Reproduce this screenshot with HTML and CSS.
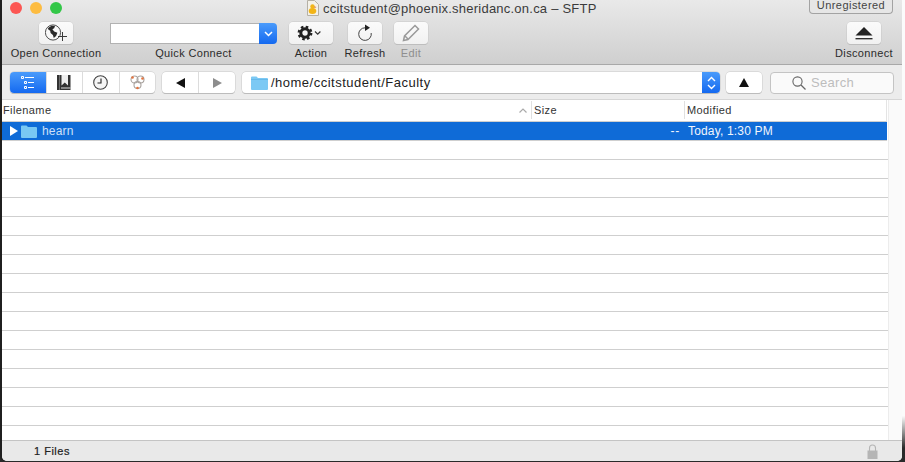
FILE: index.html
```html
<!DOCTYPE html>
<html lang="en">
<head>
<meta charset="utf-8">
<title>ccitstudent@phoenix.sheridanc.on.ca – SFTP</title>
<link rel="stylesheet" href="styles.css">
</head>
<body>
<div class="window">
  <header class="chrome">
    <div class="titlebar">
      <div class="lights"><i class="light red"></i><i class="light amber"></i><i class="light green"></i></div>
      <div class="title">
        <svg class="doc" width="13" height="16" viewBox="0 0 13 16"><path d="M1.500 .5h7l4 4v11h-11z" fill="#f4f1e8" stroke="#b5b0a5"/><circle cx="6.500" cy="6.500" r="2.200" fill="#f1b61c"/><ellipse cx="6.500" cy="11" rx="3.800" ry="2.900" fill="#f2b416"/><path d="M8.500 6.500l2 .6-2 .8z" fill="#d9541e"/></svg>
        <span>ccitstudent@phoenix.sheridanc.on.ca – SFTP</span>
      </div>
      <div class="badge">Unregistered</div>
    </div>
    <div class="toolbar">
      <div class="tool tool-open">
        <button class="btn btn-34"><svg width="23" height="18" viewBox="0 0 23 18"><circle cx="8" cy="8.500" r="7.600" fill="#f8f8f8" stroke="#3a3a3a" stroke-width=".9"/><path d="M3 4l3.500-2.300 3.500.4-.8 2.200-1.800.9 1.800 2.300 3.200 1.200-1.300 3.200-2.300 2.200-.9-3.200-2.300-1.800-.4-2.300-1.900-1.300z" fill="#2a2a2a"/><path d="M17.500 8v9M13 12.500h9" stroke="#3a3a3a" stroke-width="1" fill="none"/></svg></button>
        <span class="tool-label">Open Connection</span>
      </div>
      <div class="tool tool-quick">
        <div class="combo"><span class="combo-field"></span><span class="combo-arrow"><svg width="9" height="6" viewBox="0 0 9 6"><path d="M1 1l3.500 3.500L8 1" fill="none" stroke="#fff" stroke-width="1.500"/></svg></span></div>
        <span class="tool-label">Quick Connect</span>
      </div>
      <div class="tool tool-action">
        <button class="btn btn-44"><svg width="28" height="16" viewBox="0 0 28 16"><circle cx="8" cy="8" r="4.200" fill="none" stroke="#222" stroke-width="3"/><circle cx="8" cy="8" r="6.200" fill="none" stroke="#222" stroke-width="2.400" stroke-dasharray="2.500 2.370"/><path d="M18 6.500l2.700 2.700 2.700-2.700" fill="none" stroke="#333" stroke-width="1.200"/></svg></button>
        <span class="tool-label">Action</span>
      </div>
      <div class="tool tool-refresh">
        <button class="btn btn-34"><svg width="18" height="18" viewBox="0 0 18 18"><path d="M9 3.800A6.300 6.300 0 1 0 15.200 9" fill="none" stroke="#444" stroke-width="1"/><path d="M9 .5l5 3.300-5 3.200z" fill="#222"/></svg></button>
        <span class="tool-label">Refresh</span>
      </div>
      <div class="tool tool-edit">
        <button class="btn btn-34"><svg width="18" height="18" viewBox="0 0 18 18"><path d="M13 1.500l3.500 3.500L6 15.500l-4.500 1 1-4.500z" fill="none" stroke="#9a9a9a" stroke-width="1.500"/><path d="M3 12l3 3" stroke="#9a9a9a" stroke-width="1.500"/></svg></button>
        <span class="tool-label tool-label-off">Edit</span>
      </div>
      <div class="tool tool-disconnect">
        <button class="btn btn-34"><svg width="18" height="13" viewBox="0 0 18 13"><path d="M9 0l8.500 8.500H.5z" fill="#222"/><path d="M.5 11.700h17" stroke="#222" stroke-width="1.300"/></svg></button>
        <span class="tool-label">Disconnect</span>
      </div>
    </div>
  </header>

  <nav class="navbar">
    <div class="segment seg-views">
      <span class="seg seg-on"><svg width="13" height="13" viewBox="0 0 13 13"><g fill="none" stroke="#fff"><path d="M.5.500h2v2h-2zM3.500 5.500h2v2h-2zM3.500 10.500h2v2h-2z"/><path d="M4 1.500h9M7 6.500h6M7 11.500h6"/></g></svg></span>
      <span class="seg"><svg width="14" height="15" viewBox="0 0 14 15"><path d="M0 0h13.500v15H0z" fill="#333"/><path d="M2.500 0v15" stroke="#6d6d6d"/><path d="M4.500 0h6.500v10.500l-3.200-3-3.300 3z" fill="#eee"/><path d="M4 12.500h9.500v1H4z" fill="#ddd"/></svg></span>
      <span class="seg"><svg width="15" height="15" viewBox="0 0 15 15"><circle cx="7.500" cy="7.500" r="6.800" fill="#f6f6f6" stroke="#444" stroke-width="1.100"/><path d="M8 3.500v4.500H4.500" fill="none" stroke="#222" stroke-width="1.100"/></svg></span>
      <span class="seg"><svg width="15" height="15" viewBox="0 0 15 15"><g fill="none" stroke="#a8a29e" stroke-width="1.100"><circle cx="4.500" cy="4.500" r="3.500"/><circle cx="10.500" cy="4.500" r="3.500"/><circle cx="7.500" cy="10" r="3.500"/></g><circle cx="2.500" cy="2.500" r="1.300" fill="#e2733f"/><circle cx="12.500" cy="3.500" r="1.300" fill="#e2733f"/><circle cx="7.500" cy="13" r="1.300" fill="#e2733f"/></svg></span>
    </div>
    <div class="segment seg-nav">
      <span class="seg"><svg width="9" height="10" viewBox="0 0 9 10"><path d="M9 0v10L0 5z" fill="#111"/></svg></span>
      <span class="seg"><svg width="9" height="10" viewBox="0 0 9 10"><path d="M0 0v10l9-5z" fill="#8d8d8d"/></svg></span>
    </div>
    <div class="path">
      <svg class="folder" width="17" height="14" viewBox="0 0 17 14"><path d="M0 1.500Q0 .5 1 .5h4.500l1.500 1.500h9q1 0 1 1V13q0 1-1 1H1q-1 0-1-1z" fill="#7cc9f4"/><path d="M0 3.500h17" stroke="#57aee3" stroke-width=".6"/></svg>
      <span class="path-text">/home/ccitstudent/Faculty</span>
      <span class="stepper"><svg width="9" height="14" viewBox="0 0 9 14"><path d="M1 5l3.500-3.500L8 5M1 9l3.500 3.500L8 9" fill="none" stroke="#fff" stroke-width="1.400"/></svg></span>
    </div>
    <span class="segment seg-up"><span class="seg"><svg width="10" height="9" viewBox="0 0 10 9"><path d="M0 9h10L5 0z" fill="#111"/></svg></span></span>
    <div class="search">
      <svg width="14" height="14" viewBox="0 0 14 14"><circle cx="5.500" cy="5.500" r="4.600" fill="none" stroke="#666" stroke-width="1.100"/><path d="M9 9l4.500 4.500" stroke="#666" stroke-width="1.300"/></svg>
      <span>Search</span>
    </div>
  </nav>

  <main class="browser">
    <div class="list">
      <div class="cols head">
        <div class="hcell hcell-name"><span>Filename</span><svg width="8" height="5" viewBox="0 0 8 5"><path d="M.5 4.500L4 1l3.500 3.500" fill="none" stroke="#aaa" stroke-width="1.200"/></svg></div>
        <div class="hcell">Size</div>
        <div class="hcell">Modified</div>
      </div>
      <div class="rows">
        <div class="cols row row-selected">
          <div class="cell cell-name">
            <svg width="8" height="10" viewBox="0 0 8 10"><path d="M0 0v10l8-5z" fill="#fff"/></svg>
            <svg class="row-folder" width="16" height="13" viewBox="0 0 16 13"><path d="M0 1.500Q0 .5 1 .5h4.500l1.500 1.500h8q1 0 1 1V12q0 1-1 1H1q-1 0-1-1z" fill="#79c8f3"/></svg>
            <span>hearn</span>
          </div>
          <div class="cell cell-size">--</div>
          <div class="cell cell-date">Today, 1:30 PM</div>
        </div>
        <div class="row"></div><div class="row"></div><div class="row"></div><div class="row"></div>
        <div class="row"></div><div class="row"></div><div class="row"></div><div class="row"></div>
        <div class="row"></div><div class="row"></div><div class="row"></div><div class="row"></div>
        <div class="row"></div><div class="row"></div><div class="row"></div><div class="row"></div>
      </div>
    </div>
    <div class="scroll-track"></div>
  </main>

  <footer class="status">
    <span class="status-text">1 Files</span>
    <svg width="11" height="15" viewBox="0 0 11 15"><path d="M2.500 7V4a3 3 0 0 1 6 0v3" fill="none" stroke="#b5b5b5" stroke-width="1.100"/><path d="M.5 6.500h10V15H.5z" fill="#b5b5b5"/></svg>
  </footer>
</div>
</body>
</html>
```

FILE: styles.css
```css
* { box-sizing: border-box; }

html, body {
  margin: 0;
  height: 100%;
  overflow: hidden;
}

body {
  width: 905px;
  height: 462px;
  background: linear-gradient(#fbfbfb 90%, #2a2a2a 97%);
  padding-right: 3px;
  font-family: "Liberation Sans", Arial, sans-serif;
  color: #222;
}

.window {
  position: relative;
  display: flex;
  flex-direction: column;
  height: 461px;
  margin-left: 2px;
  background: #fff;
  border-radius: 0 0 5px 5px;
  overflow: hidden;
  box-shadow: -2px 0 0 #1f1f1f;
}

/* Title and toolbar */
.chrome {
  height: 65px;
  background: linear-gradient(#e9e9e9, #cfcfcf);
  border-bottom: 1px solid #a8a8a8;
}

.titlebar {
  display: flex;
  align-items: flex-start;
  justify-content: space-between;
  height: 22px;
  padding-left: 8px;
}

.lights {
  display: flex;
  gap: 8px;
  padding-top: 2px;
  width: 130px;
}

.light {
  width: 12px;
  height: 12px;
  border-radius: 50%;
}
.red { background: #fc5753; }
.amber { background: #fdbc40; }
.green { background: #33c748; }

.title {
  display: flex;
  align-items: center;
  gap: 4px;
  height: 16px;
  margin-left: 166px;
  margin-right: auto;
  font-size: 13px;
  letter-spacing: .23px;
  color: #3b3b3b;
  white-space: nowrap;
}

.badge {
  width: 84px;
  height: 15px;
  margin-right: 9px;
  margin-top: -1px;
  border: 1px solid #a3a3a3;
  border-top: 0;
  border-radius: 0 0 4px 4px;
  background: #e6e6e6;
  font-size: 11px;
  line-height: 12px;
  letter-spacing: .45px;
  text-align: center;
  color: #444;
}

.toolbar {
  display: flex;
  align-items: flex-start;
}

.tool {
  display: flex;
  flex-direction: column;
  align-items: center;
}

.tool-label {
  margin-top: 3px;
  font-size: 11px;
  line-height: 13px;
  letter-spacing: .34px;
  white-space: nowrap;
  color: #2b2b2b;
}
.tool-label-off { color: #8e8e8e; }

.tool-open { width: 92px; margin-left: 8px; }
.tool-quick { width: 167px; margin-left: 8px; }
.tool-action { width: 44px; margin-left: 12px; }
.tool-refresh { width: 44px; margin-left: 10px; }
.tool-edit { width: 34px; margin-left: 7px; }
.tool-disconnect { width: 60px; margin-left: auto; margin-right: 8px; }

.btn {
  display: flex;
  align-items: center;
  justify-content: center;
  height: 22px;
  padding: 0;
  background: linear-gradient(#fbfbfb, #f1f1f1);
  border: 0;
  border-radius: 4px;
  box-shadow: 0 0 0 .5px #c8c8c8, 0 1px 0 #b5b5b5;
}
.btn-34 { width: 34px; }
.btn-44 { width: 44px; }

.combo {
  display: flex;
  width: 167px;
  height: 21px;
  margin-top: 1px;
}
.combo-field {
  flex: 1;
  background: #fff;
  border: 1px solid #b2b2b2;
  border-right: 0;
}
.combo-arrow {
  display: flex;
  align-items: center;
  justify-content: center;
  width: 18px;
  background: linear-gradient(#4a9bfb, #1469f0);
  border-radius: 0 4px 4px 0;
}

/* Navigation bar */
.navbar {
  display: flex;
  align-items: center;
  height: 35px;
  padding: 1px 8px 0 8px;
  background: #ececec;
  border-bottom: 1px solid #d6d6d6;
}

.segment {
  display: flex;
  height: 21px;
  background: #fff;
  border-radius: 4px;
  box-shadow: 0 0 0 .5px #c8c8c8, 0 1px 0 #b0b0b0;
  overflow: hidden;
}

.seg {
  display: flex;
  align-items: center;
  justify-content: center;
  border-left: 1px solid #dcdcdc;
}
.seg:first-child { border-left: 0; }

.seg-views { width: 145px; }
.seg-views .seg { flex: 1; }
.seg-on { background: linear-gradient(#4a9bfb, #1469f0); }

.seg-nav { width: 73px; margin-left: 7px; }
.seg-nav .seg { flex: 1; }

.path {
  display: flex;
  align-items: center;
  width: 478px;
  height: 21px;
  margin-left: 7px;
  padding-left: 9px;
  background: #fff;
  border-radius: 4px;
  box-shadow: 0 0 0 .5px #c8c8c8, 0 1px 0 #b0b0b0;
  overflow: hidden;
}
.path-text {
  flex: 1;
  margin-left: 3px;
  font-size: 13px;
  letter-spacing: .49px;
  color: #222;
}
.stepper {
  display: flex;
  align-items: center;
  justify-content: center;
  width: 18px;
  height: 100%;
  background: linear-gradient(#4a9bfb, #1469f0);
}

.seg-up { width: 36px; margin-left: 6px; }
.seg-up .seg { flex: 1; }

.search {
  display: flex;
  align-items: center;
  gap: 5px;
  width: 124px;
  height: 22px;
  margin-left: 8px;
  padding-left: 21px;
  background: #fafafa;
  border: 1px solid #c4c4c4;
  border-radius: 4px;
  font-size: 13px;
  letter-spacing: .3px;
  color: #bdbdbd;
}

/* File table */
.browser {
  display: flex;
  flex: 1;
  min-height: 0;
}

.list {
  flex: 1;
  min-width: 0;
}

.cols {
  display: grid;
  grid-template-columns: 530px 153px 1fr;
}

.head {
  height: 22px;
  width: 885px;
  padding-top: 1px;
  border-right: 1px solid #e4e4e4;
  border-bottom: 1px solid #cfcfcf;
}
.hcell {
  display: flex;
  align-items: center;
  justify-content: space-between;
  height: 18px;
  padding: 0 2px 0 2px;
  font-size: 11px;
  letter-spacing: .4px;
  color: #333;
  border-right: 1px solid #e0e0e0;
}
.hcell:last-child { border-right: 0; }
.hcell-name { padding-left: 1px; padding-right: 4px; }

.rows {
  height: 318px;
  overflow: hidden;
}

.row {
  height: 19px;
  border-bottom: 1px solid #cfcfcf;
}

.row-selected {
  align-items: center;
  background: #0f6bd7;
  color: #f0f5fc;
  font-size: 12px;
  letter-spacing: .17px;
  width: 885px;
}

.cell-name {
  display: flex;
  align-items: center;
  padding-left: 8px;
  color: #cfe0f7;
}
.row-folder { margin-left: 3px; margin-right: 5px; }
.cell-size { text-align: right; padding-right: 5px; letter-spacing: .8px; }
.cell-date { padding-left: 3px; }

.scroll-track {
  width: 14px;
  background: #fafafa;
  border-left: 1px solid #ececec;
}

/* Status */
.status {
  display: flex;
  align-items: center;
  justify-content: space-between;
  height: 21px;
  padding: 0 24px 0 32px;
  background: #e9e9e9;
  border-top: 1px solid #c4c4c4;
}
.status-text {
  font-size: 11px;
  letter-spacing: .5px;
  color: #222;
  -webkit-text-stroke: .2px #222;
}
```
